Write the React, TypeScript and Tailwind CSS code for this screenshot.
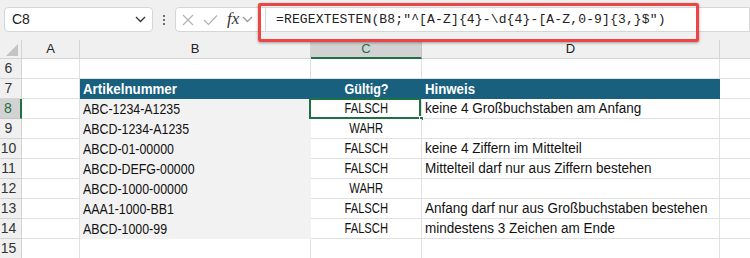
import React from "react";

const SHEET_FONT = "font-['Liberation_Sans',sans-serif] text-[14px]";

type Row = { n: number; b: string; c: string; d: string };
const rows: Row[] = [
  { n: 8, b: "ABC-1234-A1235", c: "FALSCH", d: "keine 4 Großbuchstaben am Anfang" },
  { n: 9, b: "ABCD-1234-A1235", c: "WAHR", d: "" },
  { n: 10, b: "ABCD-01-00000", c: "FALSCH", d: "keine 4 Ziffern im Mittelteil" },
  { n: 11, b: "ABCD-DEFG-00000", c: "FALSCH", d: "Mittelteil darf nur aus Ziffern bestehen" },
  { n: 12, b: "ABCD-1000-00000", c: "WAHR", d: "" },
  { n: 13, b: "AAA1-1000-BB1", c: "FALSCH", d: "Anfang darf nur aus Großbuchstaben bestehen" },
  { n: 14, b: "ABCD-1000-99", c: "FALSCH", d: "mindestens 3 Zeichen am Ende" },
];

function Chevron({ className = "" }: { className?: string }) {
  return (
    <svg width="11" height="7" viewBox="0 0 11 7" className={className}>
      <path d="M1 1 L5.5 5.5 L10 1" fill="none" stroke="currentColor" strokeWidth="1.3" />
    </svg>
  );
}

export default function App() {
  const rowHead = "h-[20px] flex items-center justify-center pr-[4px] bg-[#f0f0f0] border-r border-b border-[#d4d4d4] text-[14px] text-[#333] font-['Liberation_Sans',sans-serif]";
  const cell = "h-[20px] border-r border-b border-[#e1e1e1] bg-white";
  return (
    <div className="w-[750px] h-[258px] overflow-hidden bg-[#f0f0f0] relative select-none">
      {/* toolbar */}
      <div className="h-[40px] flex items-start pt-[7px] pl-[4px] font-['Liberation_Sans',sans-serif]">
        <div className="w-[149px] h-[25px] bg-white border border-[#d6d6d6] rounded-[4px] flex items-center pl-[7px] pr-[6px] justify-between">
          <span className="text-[14px] text-[#222]">C8</span>
          <Chevron className="text-[#333]" />
        </div>
        <div className="w-[22px] h-[25px] flex flex-col items-center justify-center gap-[2px]">
          <span className="w-[2px] h-[2px] bg-[#444] rounded-full" />
          <span className="w-[2px] h-[2px] bg-[#444] rounded-full" />
          <span className="w-[2px] h-[2px] bg-[#444] rounded-full" />
        </div>
        <div className="flex-1 h-[25px] bg-white border border-[#d6d6d6] rounded-l-[4px] flex items-center">
          <div className="flex items-center pl-[6px] gap-[9px] w-[89px]">
            <svg width="12" height="12" viewBox="0 0 12 12"><path d="M1 1 L11 11 M11 1 L1 11" stroke="#b0b0b0" strokeWidth="1.1" /></svg>
            <svg width="15" height="12" viewBox="0 0 15 12"><path d="M1 6 L5.5 10.5 L14 1.5" fill="none" stroke="#b0b0b0" strokeWidth="1.1" /></svg>
            <span className="font-['Liberation_Serif',serif] italic text-[17px] leading-none text-[#333] -mt-[2px]">fx</span>
            <Chevron className="text-[#999] -ml-[6px]" />
          </div>
          <div className="flex-1 h-full border-l border-[#d6d6d6] flex items-center pl-[10px]">
            <span className="font-['Liberation_Mono',monospace] text-[13px] tracking-[0.15px] text-[#222] whitespace-pre">=REGEXTESTEN(B8;"^[A-Z]{"{"}4{"}"}-\d{"{"}4{"}"}-[A-Z,0-9]{"{"}3,{"}"}$")</span>
          </div>
        </div>
      </div>

      {/* red annotation box */}
      <div className="absolute left-[258px] top-[3px] w-[441px] h-[39px] border-[3px] border-[#ef4444] rounded-[2px] shadow-[0_1px_3px_rgba(0,0,0,0.35)] pointer-events-none" />

      {/* sheet */}
      <div className="grid grid-cols-[22px_58px_231px_111px_298px_1fr] bg-white">
        {/* column header */}
        <div className="h-[19px] bg-[#f0f0f0] border-r border-b border-[#d4d4d4] relative">
          <svg width="12" height="12" viewBox="0 0 12 12" className="absolute right-[3px] bottom-[2px]"><path d="M12 0 L12 12 L0 12 Z" fill="#c4c4c4" /></svg>
        </div>
        {["A", "B"].map((l) => (
          <div key={l} className="h-[19px] bg-[#f0f0f0] border-r border-b border-[#d4d4d4] flex items-center justify-center text-[13px] text-[#222] font-['Liberation_Sans',sans-serif]">{l}</div>
        ))}
        <div className="h-[19px] bg-[#d2d2d2] border-r border-[#c4c4c4] border-b-2 border-b-[#1e7145] flex items-center justify-center text-[13px] text-[#1e7145] font-['Liberation_Sans',sans-serif]">C</div>
        <div className="h-[19px] bg-[#f0f0f0] border-r border-b border-[#d4d4d4] flex items-center justify-center text-[13px] text-[#222] font-['Liberation_Sans',sans-serif]">D</div>
        <div className="h-[19px] bg-[#f0f0f0] border-b border-[#d4d4d4]" />

        {/* row 6 */}
        <div className={rowHead}>6</div>
        <div className={cell} />
        <div className={cell} />
        <div className={cell} />
        <div className={cell} />
        <div className="h-[20px] border-b border-[#e1e1e1]" />

        {/* row 7 header */}
        <div className={rowHead}>7</div>
        <div className={cell} />
        <div className={`h-[20px] bg-[#19607f] flex items-center pl-[3px] text-white font-bold ${SHEET_FONT}`}>
          <span className="inline-block origin-left scale-x-[0.95] whitespace-nowrap">Artikelnummer</span>
        </div>
        <div className={`h-[20px] bg-[#19607f] flex items-center justify-center text-white font-bold ${SHEET_FONT}`}>
          <span className="inline-block scale-x-[0.9] whitespace-nowrap">Gültig?</span>
        </div>
        <div className={`h-[20px] bg-[#19607f] border-r border-[#19607f] flex items-center pl-[3px] text-white font-bold ${SHEET_FONT}`}>
          <span className="inline-block origin-left scale-x-[0.945] whitespace-nowrap">Hinweis</span>
        </div>
        <div className="h-[20px] border-b border-[#e1e1e1]" />

        {rows.map((r) => {
          const sel = r.n === 8;
          return (
            <React.Fragment key={r.n}>
              {sel ? (
                <div className="h-[20px] flex items-center justify-center pr-[4px] bg-[#d2d2d2] border-r-2 border-r-[#1e7145] border-b border-[#c4c4c4] text-[14px] text-[#1e7145] font-['Liberation_Sans',sans-serif]">{r.n}</div>
              ) : (
                <div className={rowHead}>{r.n}</div>
              )}
              <div className={cell} />
              <div className={`h-[20px] bg-[#f2f2f2] flex items-center pl-[3px] text-[#111] ${SHEET_FONT}`}>
                <span className="inline-block origin-left scale-x-[0.885] whitespace-nowrap">{r.b}</span>
              </div>
              <div className={`${cell} relative flex items-center justify-center text-[#111] ${SHEET_FONT}`}>
                <span className="inline-block scale-x-[0.8] whitespace-nowrap">{r.c}</span>
                {sel && (
                  <>
                    <div className="absolute left-[-2px] top-[-1px] right-[0px] bottom-[-1px] border-2 border-[#1e7145]" />
                    <div className="absolute right-[-3px] bottom-[-3px] w-[5px] h-[5px] bg-[#1e7145] border border-white" />
                  </>
                )}
              </div>
              <div className={`${cell} flex items-center pl-[3px] text-[#111] whitespace-nowrap overflow-visible ${SHEET_FONT}`}>
                <span className="inline-block origin-left scale-x-[0.965] whitespace-nowrap">{r.d}</span>
              </div>
              <div className="h-[20px] border-b border-[#e1e1e1]" />
            </React.Fragment>
          );
        })}

        {/* row 15 */}
        <div className={rowHead}>15</div>
        <div className={cell} />
        <div className={cell} />
        <div className={cell} />
        <div className={cell} />
        <div className="h-[20px] border-b border-[#e1e1e1]" />
      </div>
    </div>
  );
}
